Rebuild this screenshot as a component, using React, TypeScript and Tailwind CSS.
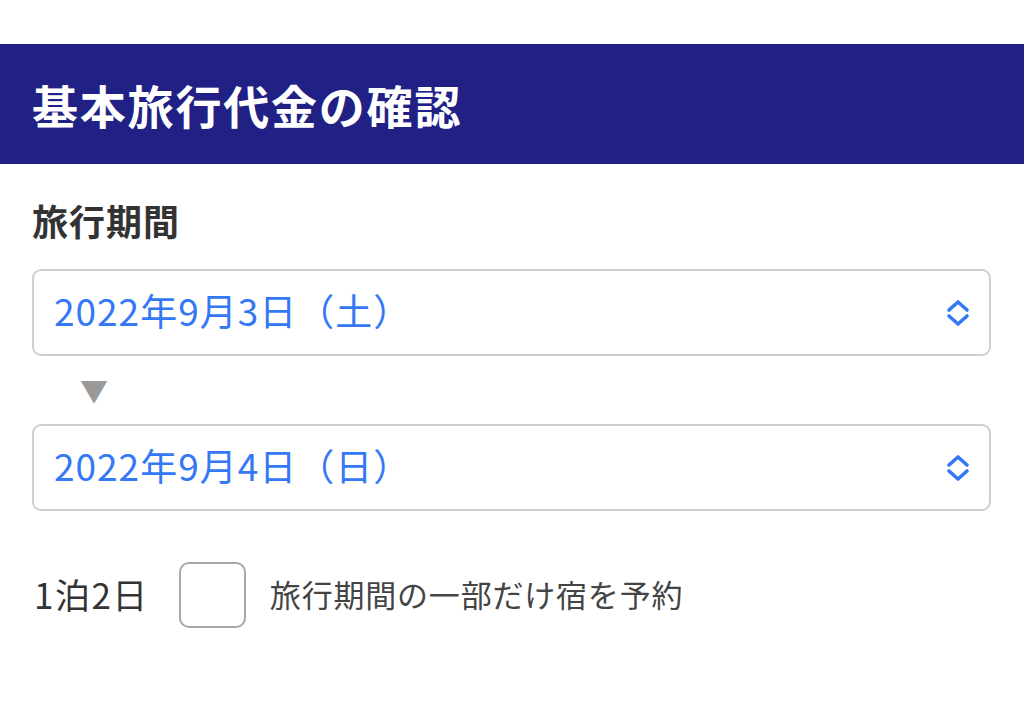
const font = "font-['Noto_Sans_CJK_JP','Noto_Sans',sans-serif]";

function Chevron() {
  return (
    <svg width="26" height="28" viewBox="0 0 26 28" fill="none" stroke="#3478f6" strokeWidth="3.6" strokeLinecap="round" strokeLinejoin="round">
      <polyline points="4,11 13,3 22,11" />
      <polyline points="4,17 13,25 22,17" />
    </svg>
  );
}

function DateSelect({ label }: { label: string }) {
  return (
    <div className="flex h-[87px] items-center justify-between rounded-[9px] border-2 border-[#cfcfcf] bg-white pl-[20px] pr-[18px]">
      <span className="pb-[5px] text-[37px] leading-none tracking-[1px] text-[#3478f6]">{label}</span>
      <Chevron />
    </div>
  );
}

export default function App() {
  return (
    <div className={`min-h-[719px] w-[1024px] bg-white ${font}`}>
      <div className="h-[44px]" />
      <div className="flex h-[120px] items-center bg-[#212185] px-[32px]">
        <h1 className="text-[46px] font-bold leading-none tracking-[1.8px] text-white">基本旅行代金の確認</h1>
      </div>
      <div className="px-[32px] pt-[38px]">
        <h2 className="text-[36px] font-bold leading-none tracking-[1px] text-[#333]">旅行期間</h2>
        <div className="mt-[31px] pr-[1px]">
          <DateSelect label="2022年9月3日（土）" />
          <div className="flex h-[68px] items-center pl-[48px]">
            <span className="text-[28px] leading-none text-[#999]">▼</span>
          </div>
          <DateSelect label="2022年9月4日（日）" />
        </div>
        <div className="mt-[51px] flex items-center">
          <span className="ml-[2px] pb-[3px] text-[35px] leading-none tracking-[1.5px] text-[#333]">1泊2日</span>
          <div className="ml-[30px] h-[66px] w-[67px] rounded-[10px] border-2 border-[#a8a8a8] bg-white" />
          <span className="ml-[24px] pb-[3px] text-[31px] leading-none tracking-[0.8px] text-[#444]">旅行期間の一部だけ宿を予約</span>
        </div>
      </div>
    </div>
  );
}
